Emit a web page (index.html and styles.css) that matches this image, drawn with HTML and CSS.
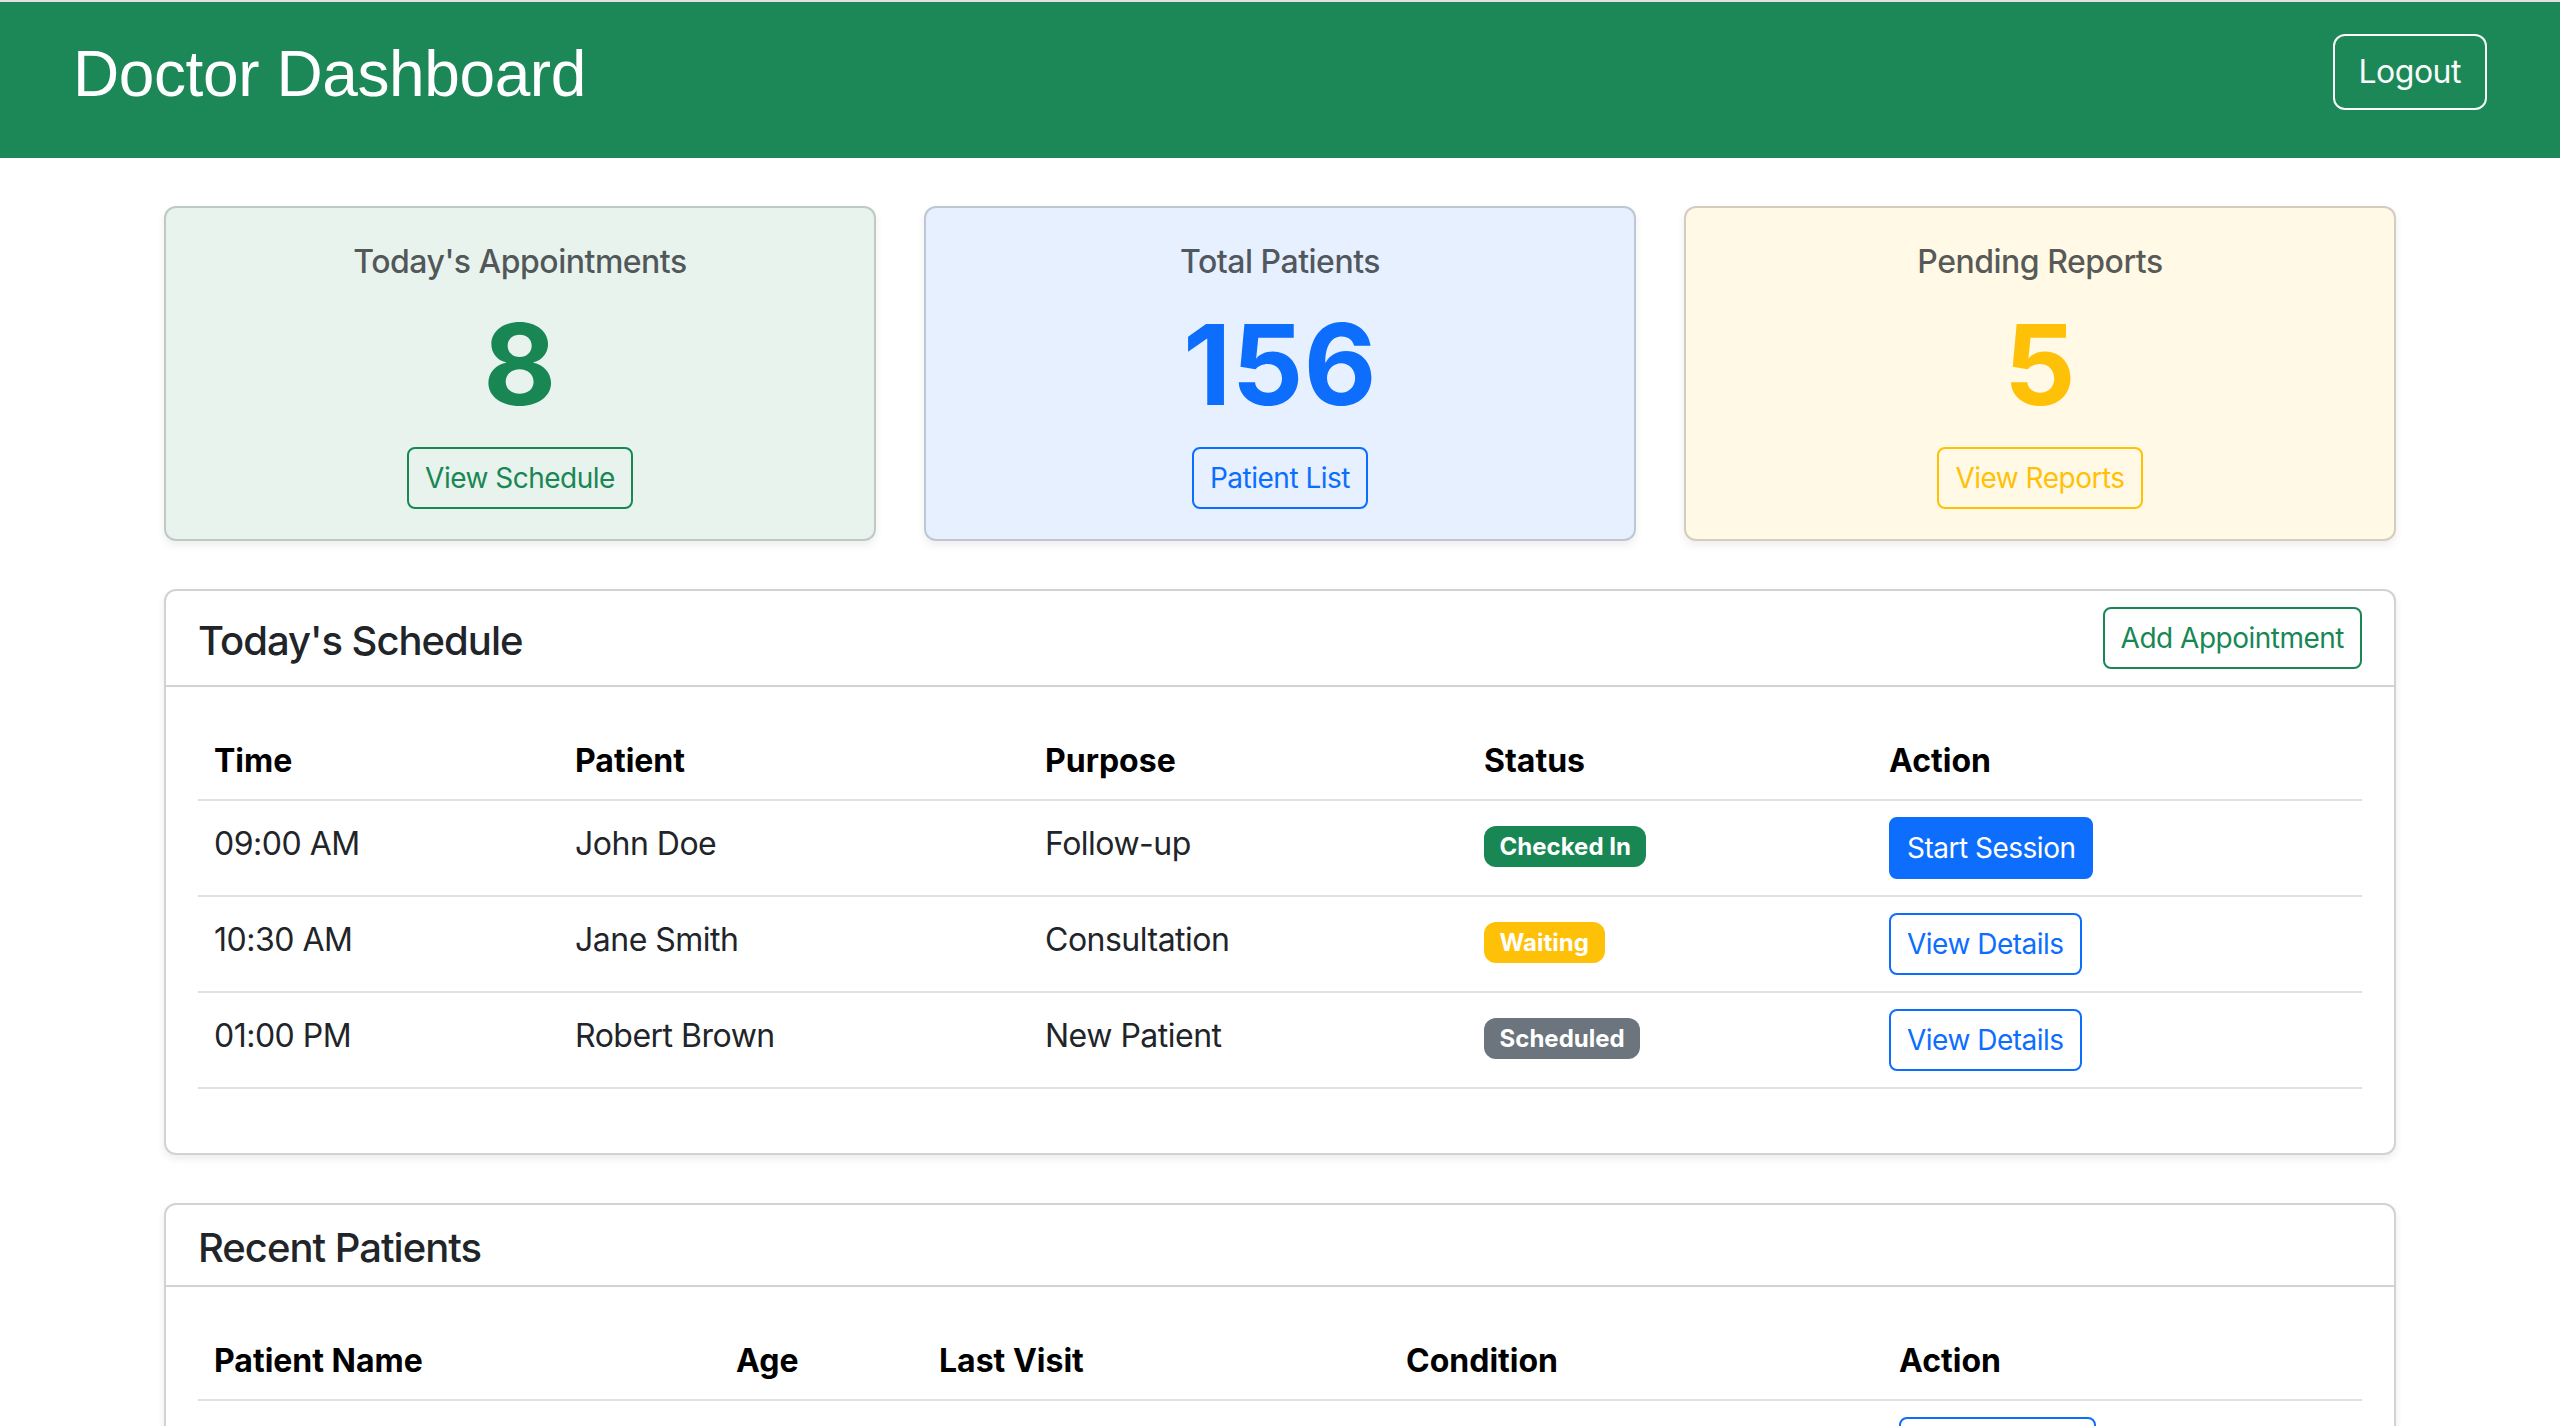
FILE: index.html
```html
<!DOCTYPE html>
<html lang="en">
<head>
<meta charset="utf-8">
<title>Doctor Dashboard</title>
<link rel="stylesheet" href="styles.css">
</head>
<body>
<header class="topbar">
  <h1 class="brand">Doctor Dashboard</h1>
  <button class="btn btn-logout">Logout</button>
</header>

<main class="container">
  <section class="stats">
    <div class="stat stat-success">
      <h6 class="stat-title">Today's Appointments</h6>
      <div class="stat-value text-success">8</div>
      <button class="btn btn-sm btn-outline-success">View Schedule</button>
    </div>
    <div class="stat stat-primary">
      <h6 class="stat-title">Total Patients</h6>
      <div class="stat-value text-primary">156</div>
      <button class="btn btn-sm btn-outline-primary">Patient List</button>
    </div>
    <div class="stat stat-warning">
      <h6 class="stat-title">Pending Reports</h6>
      <div class="stat-value text-warning">5</div>
      <button class="btn btn-sm btn-outline-warning">View Reports</button>
    </div>
  </section>

  <section class="panel">
    <div class="panel-header">
      <h5 class="panel-title">Today's Schedule</h5>
      <button class="btn btn-sm btn-outline-success">Add Appointment</button>
    </div>
    <div class="panel-body">
      <table class="table">
        <colgroup>
          <col class="s-time"><col class="s-patient"><col class="s-purpose"><col class="s-status"><col class="s-action">
        </colgroup>
        <thead>
          <tr><th>Time</th><th>Patient</th><th>Purpose</th><th>Status</th><th>Action</th></tr>
        </thead>
        <tbody>
          <tr>
            <td>09:00 AM</td><td>John Doe</td><td>Follow-up</td>
            <td><span class="badge bg-success">Checked In</span></td>
            <td><button class="btn btn-sm btn-primary">Start Session</button></td>
          </tr>
          <tr>
            <td>10:30 AM</td><td>Jane Smith</td><td>Consultation</td>
            <td><span class="badge bg-warning">Waiting</span></td>
            <td><button class="btn btn-sm btn-outline-primary">View Details</button></td>
          </tr>
          <tr>
            <td>01:00 PM</td><td>Robert Brown</td><td>New Patient</td>
            <td><span class="badge bg-secondary">Scheduled</span></td>
            <td><button class="btn btn-sm btn-outline-primary">View Details</button></td>
          </tr>
        </tbody>
      </table>
    </div>
  </section>

  <section class="panel">
    <div class="panel-header">
      <h5 class="panel-title">Recent Patients</h5>
    </div>
    <div class="panel-body">
      <table class="table">
        <colgroup>
          <col class="r-name"><col class="r-age"><col class="r-visit"><col class="r-cond"><col class="r-action">
        </colgroup>
        <thead>
          <tr><th>Patient Name</th><th>Age</th><th>Last Visit</th><th>Condition</th><th>Action</th></tr>
        </thead>
        <tbody>
          <tr>
            <td>Sarah Wilson</td><td>45</td><td>2024-01-15</td><td>Hypertension</td>
            <td><button class="btn btn-sm btn-outline-primary">View Record</button></td>
          </tr>
          <tr>
            <td>Michael Lee</td><td>32</td><td>2024-01-14</td><td>Diabetes Type 2</td>
            <td><button class="btn btn-sm btn-outline-primary">View Record</button></td>
          </tr>
          <tr>
            <td>Emily Davis</td><td>28</td><td>2024-01-12</td><td>Asthma</td>
            <td><button class="btn btn-sm btn-outline-primary">View Record</button></td>
          </tr>
        </tbody>
      </table>
    </div>
  </section>
</main>
</body>
</html>
```

FILE: styles.css
```css
* { box-sizing: border-box; }

html { scrollbar-width: none; }
html::-webkit-scrollbar { display: none; }

body {
  margin: 0;
  font-family: Inter, "Noto Sans", "Liberation Sans", sans-serif;
  font-size: 32px;
  line-height: 1.5;
  letter-spacing: -0.5px;
  color: #212529;
  background: #fff;
}

/* ---------- top bar ---------- */
.topbar {
  display: flex;
  justify-content: space-between;
  align-items: flex-start;
  height: 158px;
  padding: 34px 73px 0;
  background: #1c8857;
  border-top: 2px solid #e1e1de;
}

.brand {
  margin: 0;
  font-family: "Liberation Sans", Arial, sans-serif;
  font-weight: 400;
  font-size: 64px;
  line-height: 1.2;
  letter-spacing: -0.4px;
  color: #fff;
}

.btn {
  display: inline-block;
  font-family: inherit;
  font-weight: 400;
  letter-spacing: -0.5px;
  background: transparent;
  border: 2px solid transparent;
  cursor: pointer;
  text-align: center;
  white-space: nowrap;
}

.btn-logout {
  margin-top: -2px;
  font-size: 32px;
  line-height: 48px;
  padding: 12px 24px;
  border-radius: 12px;
  color: #f8f9fa;
  border-color: #f8f9fa;
}

.btn-sm {
  font-size: 28px;
  line-height: 42px;
  padding: 8px 16px;
  border-radius: 8px;
}

.btn-outline-success { color: #198754; border-color: #198754; }
.btn-outline-primary { color: #0d6efd; border-color: #0d6efd; }
.btn-outline-warning { color: #ffc107; border-color: #ffc107; }
.btn-primary { color: #fff; background: #0d6efd; border-color: #0d6efd; }

/* ---------- layout ---------- */
.container {
  max-width: 2280px;
  margin: 0 auto;
  padding: 48px 24px 0;
}

.stats {
  display: grid;
  grid-template-columns: repeat(3, 1fr);
  gap: 48px;
  margin-bottom: 48px;
}

.stat {
  display: flex;
  flex-direction: column;
  align-items: center;
  padding: 35px 32px 30px;
  border: 2px solid rgba(0, 0, 0, 0.175);
  border-radius: 12px;
  box-shadow: 0 4px 8px rgba(0, 0, 0, 0.075);
  text-align: center;
}

.stat-success { background: rgba(25, 135, 84, 0.1); }
.stat-primary { background: rgba(13, 110, 253, 0.1); }
.stat-warning { background: rgba(255, 193, 7, 0.1); }

.stat-title {
  margin: 0 0 16px;
  font-size: 32px;
  font-weight: 500;
  line-height: 1.2;
  color: rgba(33, 37, 41, 0.75);
}

.stat-value {
  margin-bottom: 15px;
  font-size: 112px;
  font-weight: 700;
  line-height: 1.2;
  letter-spacing: 0.5px;
}

.text-success { color: #198754; }
.text-primary { color: #0d6efd; }
.text-warning { color: #ffc107; }

/* ---------- panels ---------- */
.panel {
  margin-bottom: 48px;
  background: #fff;
  border: 2px solid rgba(0, 0, 0, 0.175);
  border-radius: 12px;
  box-shadow: 0 4px 8px rgba(0, 0, 0, 0.075);
}

.panel-header {
  display: flex;
  justify-content: space-between;
  align-items: center;
  padding: 16px 32px;
  border-bottom: 2px solid rgba(0, 0, 0, 0.175);
}

.panel-title {
  margin: 3px 0 -3px;
  font-size: 40px;
  font-weight: 500;
  line-height: 1.2;
  letter-spacing: -1px;
}

.panel-body { padding: 32px; }

.table {
  width: 100%;
  table-layout: fixed;
  border-collapse: collapse;
  margin-bottom: 32px;
}

.table th,
.table td {
  padding: 16px;
  text-align: left;
  vertical-align: top;
  border-bottom: 2px solid #dee2e6;
}

.table th {
  padding: 18px 16px 14px;
  font-weight: 700;
  letter-spacing: 0;
  color: #000;
}

.table td { line-height: 54px; }

.s-time { width: 361px; }
.s-patient { width: 470px; }
.s-purpose { width: 439px; }
.s-status { width: 405px; }
.s-action { width: 489px; }

.r-name { width: 522px; }
.r-age { width: 203px; }
.r-visit { width: 467px; }
.r-cond { width: 493px; }
.r-action { width: 479px; }

.badge {
  display: inline-block;
  padding: 8.4px 15.6px;
  font-size: 24px;
  font-weight: 700;
  line-height: 1;
  letter-spacing: 0;
  color: #fff;
  border-radius: 12px;
  white-space: nowrap;
}

.bg-success { background: #198754; }
.bg-warning { background: #ffc107; }
.bg-secondary { background: #6c757d; }
```
